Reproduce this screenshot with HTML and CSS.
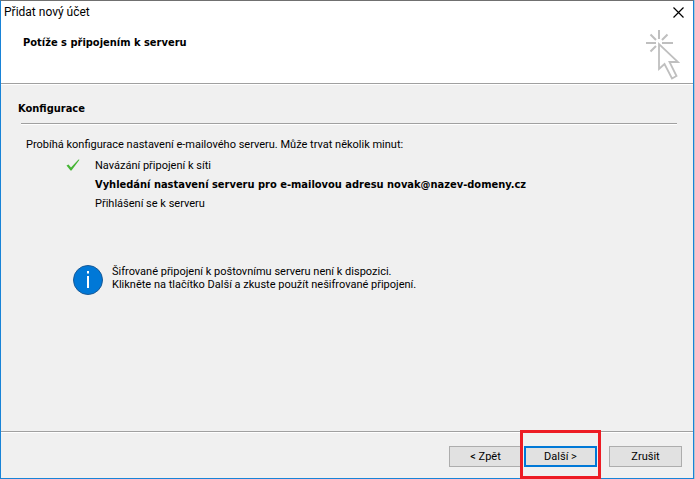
FILE: index.html
```html
<!DOCTYPE html>
<html lang="cs">
<head>
  <meta charset="UTF-8">
  <meta name="viewport" content="width=device-width, initial-scale=1.0">
  <title>Přidat nový účet</title>
  <link rel="stylesheet" href="styles.css">
</head>
<body>
  <div class="window">
    <header class="window-header">
      <div class="title-bar">
        <span class="title">Přidat nový účet</span>
        <button type="button" class="close" aria-label="Zavřít">
          <svg width="11" height="11" viewBox="0 0 11 11" fill="none" stroke="#000" stroke-width="1.2">
            <path d="M0.5 0.5L10.5 10.5M10.5 0.5L0.5 10.5"/>
          </svg>
        </button>
      </div>
      <div class="banner">
        <h1>Potíže s připojením k serveru</h1>
        <svg class="cursor-icon" width="34" height="50" viewBox="0 0 34 50" fill="none" stroke="#bfbfbf" stroke-width="2">
          <path d="M13 0V9M0 13H10M16 13H27M4.500 4.500L10 10M21.500 4.500L16 10M4.500 21.500L10 16"/>
          <path d="M13 14V39L18.500 34L26 48.500L30.500 46L23.500 32H32Z" fill="#fff" stroke-width="1.800"/>
        </svg>
      </div>
    </header>

    <main class="content">
      <h2>Konfigurace</h2>
      <hr>
      <p class="intro">Probíhá konfigurace nastavení e-mailového serveru. Může trvat několik minut:</p>
      <ul class="steps">
        <li>
          <svg class="check" width="14" height="12" viewBox="0 0 14 12">
            <path d="M0.500 6.500L2.500 5.500L5 8.500L12.500 0.500L13.500 0.800L5.500 11.500H4.500Z" fill="#46b535"/>
          </svg>
          Navázání připojení k síti
        </li>
        <li class="current">Vyhledání nastavení serveru pro e-mailovou adresu novak@nazev-domeny.cz</li>
        <li>Přihlášení se k serveru</li>
      </ul>
      <div class="notice">
        <svg width="32" height="32" viewBox="0 0 32 32">
          <circle cx="16" cy="16" r="14.500" fill="#0078d7" stroke="#1a5a96"/>
          <path d="M15 7h2v2.500h-2zM15 12h2v12h-2z" fill="#fff"/>
        </svg>
        <p>Šifrované připojení k poštovnímu serveru není k dispozici.<br>Klikněte na tlačítko Další a zkuste použít nešifrované připojení.</p>
      </div>
    </main>

    <footer class="actions">
      <div class="wizard-buttons">
        <button type="button">&lt; Zpět</button>
        <div class="next">
          <button type="button" class="default">Další &gt;</button>
        </div>
      </div>
      <button type="button">Zrušit</button>
    </footer>
  </div>
</body>
</html>
```

FILE: styles.css
```css
:root {
  --accent: #0078d7;
  --frame: #1883d7;
  --face: #f0f0f0;
  --line: #a0a0a0;
  --marker: #ed1c24;
}

* {
  box-sizing: border-box;
  margin: 0;
  padding: 0;
}

body {
  background: #b4c3d0;
  padding-right: 1px;
  color: #000;
  font-family: Roboto, Tahoma, sans-serif;
  font-size: 11px;
  line-height: 13px;
}

.window {
  display: flex;
  flex-direction: column;
  min-height: 100vh;
  background: var(--face);
  border: 1px solid var(--frame);
  border-top-color: #707070;
}

.window-header {
  background: #fff;
  border-bottom: 1px solid var(--line);
}

.title-bar {
  display: flex;
  justify-content: space-between;
  align-items: center;
  height: 22px;
  padding: 0 9px 0 3px;
  font-size: 12px;
}

.close {
  display: flex;
  border: none;
  background: none;
}

.banner {
  display: flex;
  justify-content: space-between;
  height: 60px;
  padding: 7px 13px 0 22px;
}

h1,
h2,
.steps .current {
  font-family: "DejaVu Sans Condensed", Tahoma, sans-serif;
  font-size: 11px;
  font-weight: bold;
  line-height: 13px;
}

h1 {
  padding-top: 6px;
}

.content {
  flex: 1;
  border-top: 1px solid #fff;
  padding: 17px 16px 0 17px;
}

hr {
  margin: 8px 0 0 3px;
  border: none;
  border-top: 1px solid var(--line);
  border-bottom: 1px solid #fff;
}

.intro {
  margin: 13px 0 8px 8px;
}

.steps {
  list-style: none;
  padding-left: 77px;
}

.steps li {
  position: relative;
  margin-bottom: 6px;
}

.check {
  position: absolute;
  left: -29px;
  top: 0;
}

.notice {
  display: flex;
  gap: 8px;
  margin-top: 54px;
  padding-left: 54px;
}

.notice p {
  padding-top: 1px;
}

.actions {
  display: flex;
  justify-content: flex-end;
  gap: 12px;
  padding: 14px 11px 11px;
  border-top: 1px solid var(--line);
  box-shadow: inset 0 1px #fff;
}

.wizard-buttons {
  display: flex;
  gap: 2px;
}

.actions button {
  width: 73px;
  height: 21px;
  background: #e1e1e1;
  border: 1px solid #adadad;
  font: inherit;
}

.actions .default {
  border: 2px solid var(--accent);
}

.next {
  position: relative;
}

/* highlight frame around the default button */
.next::after {
  content: "";
  position: absolute;
  inset: -16px -4px -12px -4px;
  border: 3px solid var(--marker);
  pointer-events: none;
}
```
